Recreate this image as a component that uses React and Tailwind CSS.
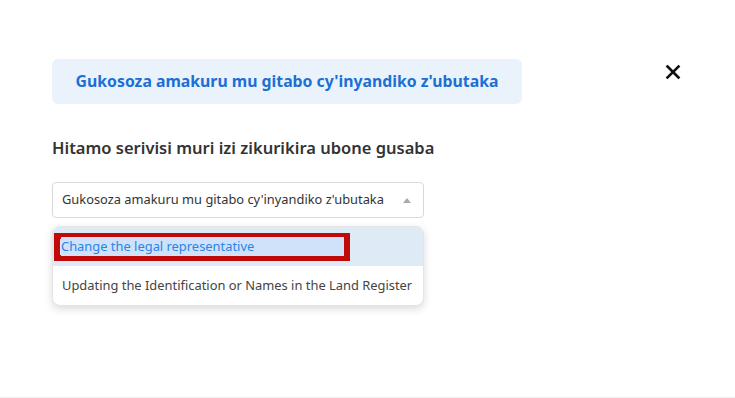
export default function App() {
  return (
    <div className="relative h-[398px] w-[735px] bg-white text-[#333] [font-family:'Noto_Sans',sans-serif]">
      <div className="flex items-start justify-between pl-[52px] pr-[54px] pt-[59px]">
        <div className="flex h-[45px] w-[470px] items-center justify-center rounded-md bg-[#eaf2fb] text-[15.8px] font-bold text-[#1b6fd6]">
          Gukosoza amakuru mu gitabo cy'inyandiko z'ubutaka
        </div>
        <button className="mt-[5px] text-[#111]">
          <svg width="16" height="16" viewBox="0 0 16 16" fill="none" stroke="currentColor" strokeWidth="2.6" strokeLinecap="square">
            <path d="M2.5 2.5 L13.5 13.5 M13.5 2.5 L2.5 13.5" />
          </svg>
        </button>
      </div>

      <div className="pl-[52px]">
        <h2 className="mt-[32px] text-[16.5px] font-semibold leading-[24px] text-[#333]">
          Hitamo serivisi muri izi zikurikira ubone gusaba
        </h2>

        <div className="mt-[22px] flex h-[36px] w-[372px] items-center justify-between rounded border border-[#d9d9d9] pl-[9px] pr-[12px] text-[12.85px]">
          <span>Gukosoza amakuru mu gitabo cy'inyandiko z'ubutaka</span>
          <span className="h-0 w-0 border-x-[4px] border-b-[5px] border-x-transparent border-b-[#aaa]"></span>
        </div>

        <div className="mt-[8px] w-[372px] overflow-hidden rounded-lg border border-[#e4e4e4] bg-white text-[12.9px] shadow-[0_3px_8px_rgba(0,0,0,0.15)]">
          <div className="flex h-[39px] items-center bg-[#deebf7] pl-[1px]">
            <div className="flex h-[28px] w-[296px] items-center border-[6px] border-[#c00a0a] pl-[1px]">
              <span className="flex-1 bg-[#cfe2fa] text-[#2a84e8]">Change the legal representative</span>
            </div>
          </div>
          <div className="flex h-[39px] items-center pl-[9px] text-[#444]">
            Updating the Identification or Names in the Land Register
          </div>
        </div>
      </div>

      <div className="absolute bottom-0 left-0 h-px w-full bg-[#eeeeee]"></div>
    </div>
  );
}
